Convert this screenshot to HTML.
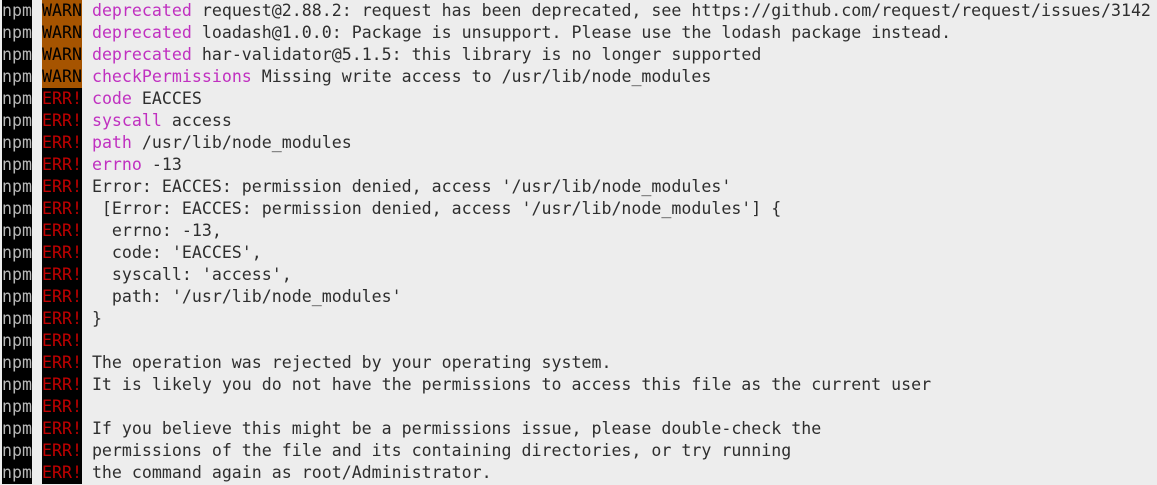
<!DOCTYPE html>
<html><head><style>
html,body{margin:0;padding:0;background:#ededed;width:1157px;height:485px;overflow:hidden}
.r{height:22px;white-space:pre;padding-left:2px;font:16.6px/22px "DejaVu Sans Mono","Liberation Mono",monospace;color:#2e2e2e}
.n{background:#000;color:#b8b8b8;display:inline-block;height:22px}
.w{background:#a65400;color:#000;display:inline-block;height:22px}
.e{background:#000;color:#c00000;display:inline-block;height:22px}
.m{color:#c030c0}
</style></head><body>
<div class="r"><span class="n">npm</span> <span class="w">WARN</span> <span class="m">deprecated</span> request@2.88.2: request has been deprecated, see https://github.com/request/request/issues/3142</div>
<div class="r"><span class="n">npm</span> <span class="w">WARN</span> <span class="m">deprecated</span> loadash@1.0.0: Package is unsupport. Please use the lodash package instead.</div>
<div class="r"><span class="n">npm</span> <span class="w">WARN</span> <span class="m">deprecated</span> har-validator@5.1.5: this library is no longer supported</div>
<div class="r"><span class="n">npm</span> <span class="w">WARN</span> <span class="m">checkPermissions</span> Missing write access to /usr/lib/node_modules</div>
<div class="r"><span class="n">npm</span> <span class="e">ERR!</span> <span class="m">code</span> EACCES</div>
<div class="r"><span class="n">npm</span> <span class="e">ERR!</span> <span class="m">syscall</span> access</div>
<div class="r"><span class="n">npm</span> <span class="e">ERR!</span> <span class="m">path</span> /usr/lib/node_modules</div>
<div class="r"><span class="n">npm</span> <span class="e">ERR!</span> <span class="m">errno</span> -13</div>
<div class="r"><span class="n">npm</span> <span class="e">ERR!</span> Error: EACCES: permission denied, access '/usr/lib/node_modules'</div>
<div class="r"><span class="n">npm</span> <span class="e">ERR!</span>  [Error: EACCES: permission denied, access '/usr/lib/node_modules'] {</div>
<div class="r"><span class="n">npm</span> <span class="e">ERR!</span>   errno: -13,</div>
<div class="r"><span class="n">npm</span> <span class="e">ERR!</span>   code: 'EACCES',</div>
<div class="r"><span class="n">npm</span> <span class="e">ERR!</span>   syscall: 'access',</div>
<div class="r"><span class="n">npm</span> <span class="e">ERR!</span>   path: '/usr/lib/node_modules'</div>
<div class="r"><span class="n">npm</span> <span class="e">ERR!</span> }</div>
<div class="r"><span class="n">npm</span> <span class="e">ERR!</span> </div>
<div class="r"><span class="n">npm</span> <span class="e">ERR!</span> The operation was rejected by your operating system.</div>
<div class="r"><span class="n">npm</span> <span class="e">ERR!</span> It is likely you do not have the permissions to access this file as the current user</div>
<div class="r"><span class="n">npm</span> <span class="e">ERR!</span> </div>
<div class="r"><span class="n">npm</span> <span class="e">ERR!</span> If you believe this might be a permissions issue, please double-check the</div>
<div class="r"><span class="n">npm</span> <span class="e">ERR!</span> permissions of the file and its containing directories, or try running</div>
<div class="r"><span class="n">npm</span> <span class="e">ERR!</span> the command again as root/Administrator.</div>
</body></html>
